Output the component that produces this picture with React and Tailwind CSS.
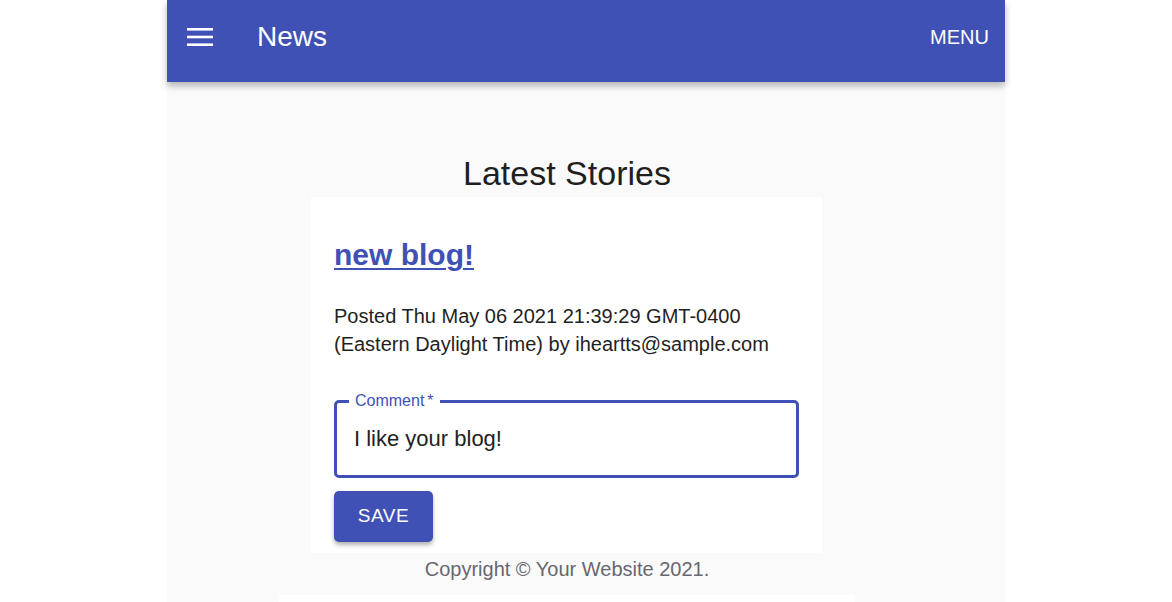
import { useState } from 'react';

const Hamburger = () => (
  <svg width="26" height="18" viewBox="0 0 26 18" fill="white">
    <rect x="0" y="0" width="26" height="2.6" />
    <rect x="0" y="7.7" width="26" height="2.6" />
    <rect x="0" y="15.4" width="26" height="2.6" />
  </svg>
);

const Header = () => (
  <header className="relative z-10 h-[82px] bg-[#3f51b5] shadow-[0_4px_7px_rgba(0,0,0,0.28)]">
    <div className="flex h-[74px] items-center pl-[20px] pr-[16px]">
      <Hamburger />
      <h1 className="ml-[44px] text-[28px] leading-none text-white">News</h1>
      <button className="ml-auto text-[20px] leading-none text-white">MENU</button>
    </div>
  </header>
);

const CommentField = ({ value, onChange }) => (
  <div className="relative h-[78px] rounded-[5px] border-[3px] border-[#3f51b5]">
    <label className="absolute left-[12px] top-[-11px] bg-white px-[6px] text-[16px] leading-[18px] text-[#3f51b5]">
      Comment<span className="ml-[3px]">*</span>
    </label>
    <input
      value={value}
      onChange={e => onChange(e.target.value)}
      className="h-full w-full bg-transparent px-[17px] text-[22px] text-[#222] outline-none"
    />
  </div>
);

export default function App() {
  const [comment, setComment] = useState('I like your blog!');

  return (
    <div className="h-[602px] overflow-hidden bg-white font-['Liberation_Sans',Arial,sans-serif]">
      <div className="mx-auto h-[602px] w-[838px] bg-[#fafafa]">
        <Header />
        <main className="w-[800px] pt-[71px]">
          <h2 className="text-center text-[34px] leading-[40px] text-[#1f1f1f]">Latest Stories</h2>

          <article className="ml-[144px] mt-[4px] w-[511px] bg-white px-[23px] pb-[11px] pt-[40px]">
            <a href="#" className="block text-[30px] font-bold leading-[36px] text-[#3f51b5] underline decoration-[2px] underline-offset-[3px]">
              new blog!
            </a>
            <p className="mt-[29px] text-[20px] leading-[28px] text-[#1f1f1f]">
              Posted Thu May 06 2021 21:39:29 GMT-0400 (Eastern Daylight Time) by iheartts@sample.com
            </p>
            <div className="mt-[42px]">
              <CommentField value={comment} onChange={setComment} />
            </div>
            <button className="mt-[13px] h-[51px] w-[99px] rounded-[5px] bg-[#3f51b5] text-[19px] tracking-[0.03em] text-white shadow-[0_3px_4px_rgba(0,0,0,0.3)]">
              SAVE
            </button>
          </article>

          <footer className="mt-[2px] text-center text-[20px] leading-[28px] text-[#67676f]">
            Copyright © Your Website 2021.
          </footer>

          <div className="ml-[112px] mt-[12px] h-[40px] w-[576px] bg-white" />
        </main>
      </div>
    </div>
  );
}
